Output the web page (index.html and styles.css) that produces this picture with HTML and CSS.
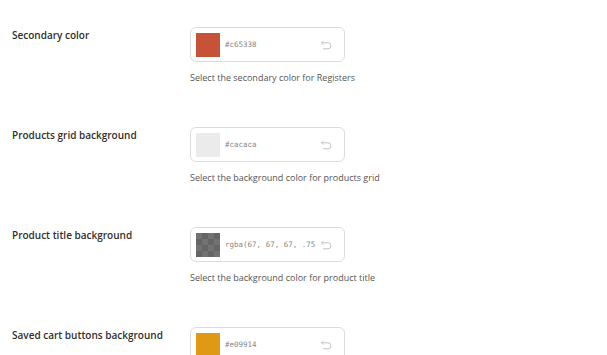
FILE: index.html
```html
<!DOCTYPE html>
<html lang="en">
<head>
    <meta charset="UTF-8">
    <meta name="viewport" content="width=device-width, initial-scale=1.0">
    <title>Color settings</title>
    <link rel="stylesheet" href="styles.css">
</head>
<body>

<div class="settings">
    <div class="row">
        <div class="label">Secondary color</div>
        <div class="field">
            <div class="picker">
                <span class="swatch" style="background-color: #c65338;"></span>
                <span class="value">#c65338</span>
                <svg class="reset" width="12" height="10" viewBox="0 0 12 10"><path d="M3.5 1 L1.5 2.8 L3.5 4.6 M1.5 2.8 H8 A3 3 0 0 1 8 8.8 H3"/></svg>
            </div>
            <p class="desc">Select the secondary color for Registers</p>
        </div>
    </div>

    <div class="row">
        <div class="label">Products grid background</div>
        <div class="field">
            <div class="picker">
                <span class="swatch" style="background-color: #ebebeb;"></span>
                <span class="value">#cacaca</span>
                <svg class="reset" width="12" height="10" viewBox="0 0 12 10"><path d="M3.5 1 L1.5 2.8 L3.5 4.6 M1.5 2.8 H8 A3 3 0 0 1 8 8.8 H3"/></svg>
            </div>
            <p class="desc">Select the background color for products grid</p>
        </div>
    </div>

    <div class="row">
        <div class="label">Product title background</div>
        <div class="field">
            <div class="picker">
                <span class="swatch checker"><span class="tint" style="background-color: rgba(67, 67, 67, .75);"></span></span>
                <span class="value">rgba(67, 67, 67, .75</span>
                <svg class="reset" width="12" height="10" viewBox="0 0 12 10"><path d="M3.5 1 L1.5 2.8 L3.5 4.6 M1.5 2.8 H8 A3 3 0 0 1 8 8.8 H3"/></svg>
            </div>
            <p class="desc">Select the background color for product title</p>
        </div>
    </div>

    <div class="row">
        <div class="label">Saved cart buttons background</div>
        <div class="field">
            <div class="picker">
                <span class="swatch" style="background-color: #e09914;"></span>
                <span class="value">#e09914</span>
                <svg class="reset" width="12" height="10" viewBox="0 0 12 10"><path d="M3.5 1 L1.5 2.8 L3.5 4.6 M1.5 2.8 H8 A3 3 0 0 1 8 8.8 H3"/></svg>
            </div>
        </div>
    </div>
</div>

</body>
</html>
```

FILE: styles.css
```css
body {
    font-family: "Open Sans", Arial, sans-serif;
    margin: 0;
    padding: 0;
    background-color: #fff;
    color: #333;
    overflow: hidden;
}
.settings {
    padding: 27px 0 0 12px;
}
.row {
    display: flex;
    height: 100px;
}
.label {
    width: 178px;
    font-size: 10px;
    font-weight: 600;
    color: #2f2f2f;
    padding-top: 1px;
    line-height: 14px;
}
.field {
    display: flex;
    flex-direction: column;
}
.picker {
    box-sizing: border-box;
    width: 155px;
    height: 35px;
    border: 1px solid #dcdcdc;
    border-radius: 6px;
    display: flex;
    align-items: center;
    padding: 0 6px 0 5px;
}
.swatch {
    width: 24px;
    height: 24px;
    flex-shrink: 0;
    display: block;
}
.checker {
    background-color: #fff;
    background-image: conic-gradient(#ccc 25%, #fff 0 50%, #ccc 0 75%, #fff 0);
    background-size: 12px 12px;
}
.tint {
    display: block;
    width: 100%;
    height: 100%;
}
.value {
    font-family: "DejaVu Sans Mono", monospace;
    font-size: 7.5px;
    color: #888;
    margin-left: 5px;
    flex: 1;
    white-space: nowrap;
    overflow: hidden;
}
.reset {
    fill: none;
    stroke: #c4c4c4;
    stroke-width: 1;
    margin-right: 6px;
    flex-shrink: 0;
}
.desc {
    margin: 9px 0 0 0;
    font-size: 9px;
    color: #555;
}
```
